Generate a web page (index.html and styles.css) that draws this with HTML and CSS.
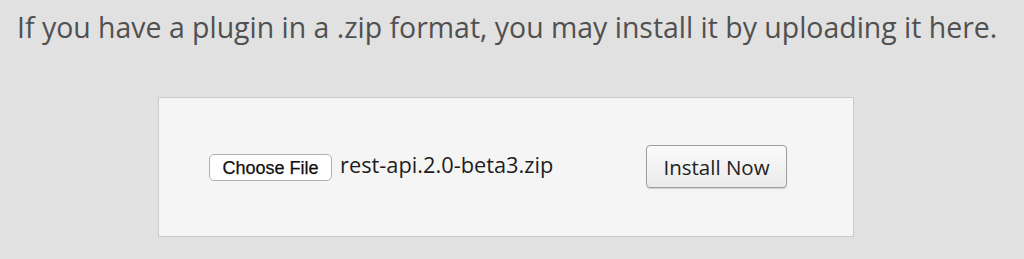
FILE: index.html
```html
<!DOCTYPE html>
<html>
<head>
<meta charset="utf-8">
<link rel="stylesheet" href="styles.css">
</head>
<body>
<p class="intro">If you have a plugin in a .zip format, you may install it by uploading it here.</p>
<form class="upload-box">
  <div class="file-field">
    <span class="choose-btn">Choose File</span>
    <span class="file-name">rest-api.2.0-beta3.zip</span>
  </div>
  <span class="install-btn">Install Now</span>
</form>
</body>
</html>
```
FILE: styles.css
```css
html, body {
  margin: 0;
  padding: 0;
  background: #e1e1e1;
}
body {
  font-family: "Open Sans", sans-serif;
  width: 1024px;
  height: 259px;
  overflow: hidden;
}
.intro {
  margin: 0;
  padding: 8px 0 0 17px;
  font-size: 28.45px;
  line-height: 39px;
  color: #505050;
  white-space: nowrap;
}
.upload-box {
  box-sizing: border-box;
  margin: 50px 0 0 158px;
  width: 696px;
  height: 140px;
  background: #f5f5f5;
  border: 1px solid #cbcbcb;
  display: flex;
  align-items: center;
  padding-left: 50px;
}
.file-field {
  display: flex;
  align-items: center;
  width: 437px;
}
.choose-btn {
  box-sizing: border-box;
  width: 123px;
  height: 27px;
  border: 1px solid #b0b0b0;
  border-radius: 5px;
  background: #fff;
  font-family: "Liberation Sans", Arial, sans-serif;
  font-size: 18px;
  color: #111;
  -webkit-text-stroke: 0.25px #111;
  display: flex;
  align-items: center;
  justify-content: center;
  padding-top: 2px;
}
.file-name {
  margin-left: 8px;
  font-size: 21.8px;
  color: #1e1e1e;
  margin-top: -6px;
}
.install-btn {
  box-sizing: border-box;
  width: 141px;
  height: 43px;
  border: 1px solid #9e9e9e;
  border-radius: 4px;
  background: linear-gradient(#fafafa, #ebebeb);
  box-shadow: 0 1px 1px rgba(0,0,0,0.15);
  font-size: 20.5px;
  color: #222;
  display: flex;
  align-items: center;
  justify-content: center;
  margin-top: -1px;
}
```
